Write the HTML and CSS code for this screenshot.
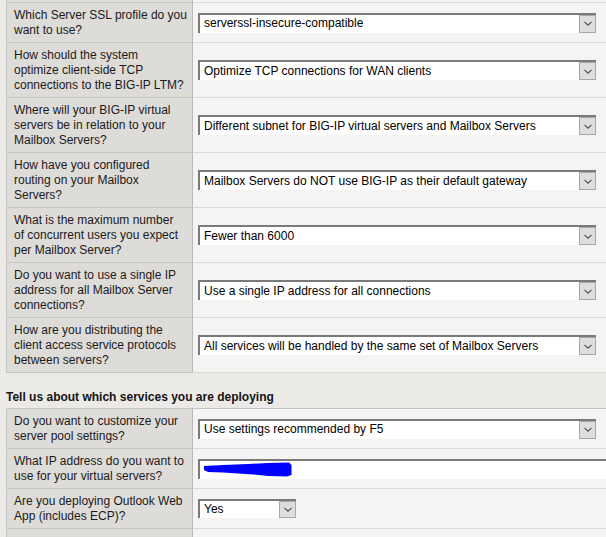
FILE: index.html
```html
<!DOCTYPE html>
<html lang="en">
<head>
<meta charset="utf-8">
<title>Exchange iApp settings</title>
<link rel="stylesheet" href="styles.css">
</head>
<body>
<div class="form">
  <div class="row stub"><div class="q"></div><div class="v"></div></div>
  <div class="row">
    <div class="q">Which Server SSL profile do you<br>want to use?</div>
    <div class="v"><div class="sel"><span class="txt">serverssl-insecure-compatible</span><span class="btn"><svg width="8" height="5" viewBox="0 0 8 5"><path d="M0.5 0.8 L4 4.2 L7.5 0.8" fill="none" stroke="#505050" stroke-width="1.1"/></svg></span></div></div>
  </div>
  <div class="row">
    <div class="q">How should the system<br>optimize client-side TCP<br>connections to the BIG-IP LTM?</div>
    <div class="v"><div class="sel"><span class="txt">Optimize TCP connections for WAN clients</span><span class="btn"><svg width="8" height="5" viewBox="0 0 8 5"><path d="M0.5 0.8 L4 4.2 L7.5 0.8" fill="none" stroke="#505050" stroke-width="1.1"/></svg></span></div></div>
  </div>
  <div class="row">
    <div class="q">Where will your BIG-IP virtual<br>servers be in relation to your<br>Mailbox Servers?</div>
    <div class="v"><div class="sel"><span class="txt">Different subnet for BIG-IP virtual servers and Mailbox Servers</span><span class="btn"><svg width="8" height="5" viewBox="0 0 8 5"><path d="M0.5 0.8 L4 4.2 L7.5 0.8" fill="none" stroke="#505050" stroke-width="1.1"/></svg></span></div></div>
  </div>
  <div class="row">
    <div class="q">How have you configured<br>routing on your Mailbox<br>Servers?</div>
    <div class="v"><div class="sel"><span class="txt">Mailbox Servers do NOT use BIG-IP as their default gateway</span><span class="btn"><svg width="8" height="5" viewBox="0 0 8 5"><path d="M0.5 0.8 L4 4.2 L7.5 0.8" fill="none" stroke="#505050" stroke-width="1.1"/></svg></span></div></div>
  </div>
  <div class="row">
    <div class="q">What is the maximum number<br>of concurrent users you expect<br>per Mailbox Server?</div>
    <div class="v"><div class="sel"><span class="txt">Fewer than 6000</span><span class="btn"><svg width="8" height="5" viewBox="0 0 8 5"><path d="M0.5 0.8 L4 4.2 L7.5 0.8" fill="none" stroke="#505050" stroke-width="1.1"/></svg></span></div></div>
  </div>
  <div class="row">
    <div class="q">Do you want to use a single IP<br>address for all Mailbox Server<br>connections?</div>
    <div class="v"><div class="sel"><span class="txt">Use a single IP address for all connections</span><span class="btn"><svg width="8" height="5" viewBox="0 0 8 5"><path d="M0.5 0.8 L4 4.2 L7.5 0.8" fill="none" stroke="#505050" stroke-width="1.1"/></svg></span></div></div>
  </div>
  <div class="row">
    <div class="q">How are you distributing the<br>client access service protocols<br>between servers?</div>
    <div class="v"><div class="sel"><span class="txt">All services will be handled by the same set of Mailbox Servers</span><span class="btn"><svg width="8" height="5" viewBox="0 0 8 5"><path d="M0.5 0.8 L4 4.2 L7.5 0.8" fill="none" stroke="#505050" stroke-width="1.1"/></svg></span></div></div>
  </div>
</div>

<h3 class="section">Tell us about which services you are deploying</h3>

<div class="form top">
  <div class="row">
    <div class="q">Do you want to customize your<br>server pool settings?</div>
    <div class="v"><div class="sel"><span class="txt">Use settings recommended by F5</span><span class="btn"><svg width="8" height="5" viewBox="0 0 8 5"><path d="M0.5 0.8 L4 4.2 L7.5 0.8" fill="none" stroke="#505050" stroke-width="1.1"/></svg></span></div></div>
  </div>
  <div class="row">
    <div class="q">What IP address do you want to<br>use for your virtual servers?</div>
    <div class="v"><div class="inp"><svg class="scribble" width="90" height="15" viewBox="0 0 90 15"><path d="M1 4 L20 3 L45 2 L65 1 L86 0.5 L88.5 3 L88.5 13 L84 14.5 L65 14 L50 12.5 L35 11.5 L20 10.5 L5 10 L1 8 Z" fill="#0000ff"/></svg></div></div>
  </div>
  <div class="row">
    <div class="q">Are you deploying Outlook Web<br>App (includes ECP)?</div>
    <div class="v"><div class="sel small"><span class="txt">Yes</span><span class="btn"><svg width="8" height="5" viewBox="0 0 8 5"><path d="M0.5 0.8 L4 4.2 L7.5 0.8" fill="none" stroke="#505050" stroke-width="1.1"/></svg></span></div></div>
  </div>
  <div class="row">
    <div class="q">&nbsp;</div>
    <div class="v"></div>
  </div>
</div>
</body>
</html>
```

FILE: styles.css
```css
html, body {
  margin: 0;
  padding: 0;
}
body {
  background: #eceae7;
  font-family: "Liberation Sans", Arial, sans-serif;
  font-size: 12px;
  color: #1a1a1a;
  overflow: hidden;
  width: 606px;
  height: 537px;
}
.form {
  margin-left: 6px;
  width: 640px;
  border-left: 1px solid #c4c4c4;
}
.form.top {
  border-top: 1px solid #c4c4c4;
}
.row {
  display: grid;
  grid-template-columns: 186px 1fr;
}
.q {
  background: #dedcd9;
  border-right: 1px solid #b9b9b9;
  border-bottom: 1px solid #c6c6c6;
  padding: 5px 7px 4px;
  line-height: 15px;
  white-space: nowrap;
}
.v {
  background: #f5f4f2;
  border-bottom: 1px solid #dadada;
  padding-left: 5px;
  display: flex;
  align-items: center;
}
.stub .q, .stub .v {
  height: 3px;
  padding-top: 0;
  padding-bottom: 0;
  box-sizing: border-box;
}
.sel {
  box-sizing: border-box;
  width: 398px;
  height: 20px;
  background: #fff;
  border-top: 2px solid #7a7a7a;
  border-left: 2px solid #7a7a7a;
  display: flex;
  align-items: center;
  color: #000;
  line-height: 15px;
}
.sel.small {
  width: 98px;
  height: 19px;
}
.txt {
  padding-left: 4px;
  white-space: nowrap;
  overflow: hidden;
  flex: 1;
}
.btn {
  box-sizing: border-box;
  width: 17px;
  height: 18px;
  border: 1px solid #a7a7a7;
  background: #dfdedd;
  display: flex;
  align-items: center;
  justify-content: center;
  flex: none;
}
.sel.small .btn {
  height: 17px;
}
.btn svg {
  display: block;
}
.inp {
  box-sizing: border-box;
  width: 430px;
  height: 20px;
  background: #fff;
  border-top: 2px solid #7a7a7a;
  border-left: 2px solid #7a7a7a;
  display: flex;
  align-items: center;
}
.scribble {
  display: block;
  margin-left: 3px;
}
.section {
  margin: 17px 0 3px;
  padding-left: 6px;
  font-size: 12px;
  line-height: 15px;
  font-weight: bold;
  color: #151515;
}
```
